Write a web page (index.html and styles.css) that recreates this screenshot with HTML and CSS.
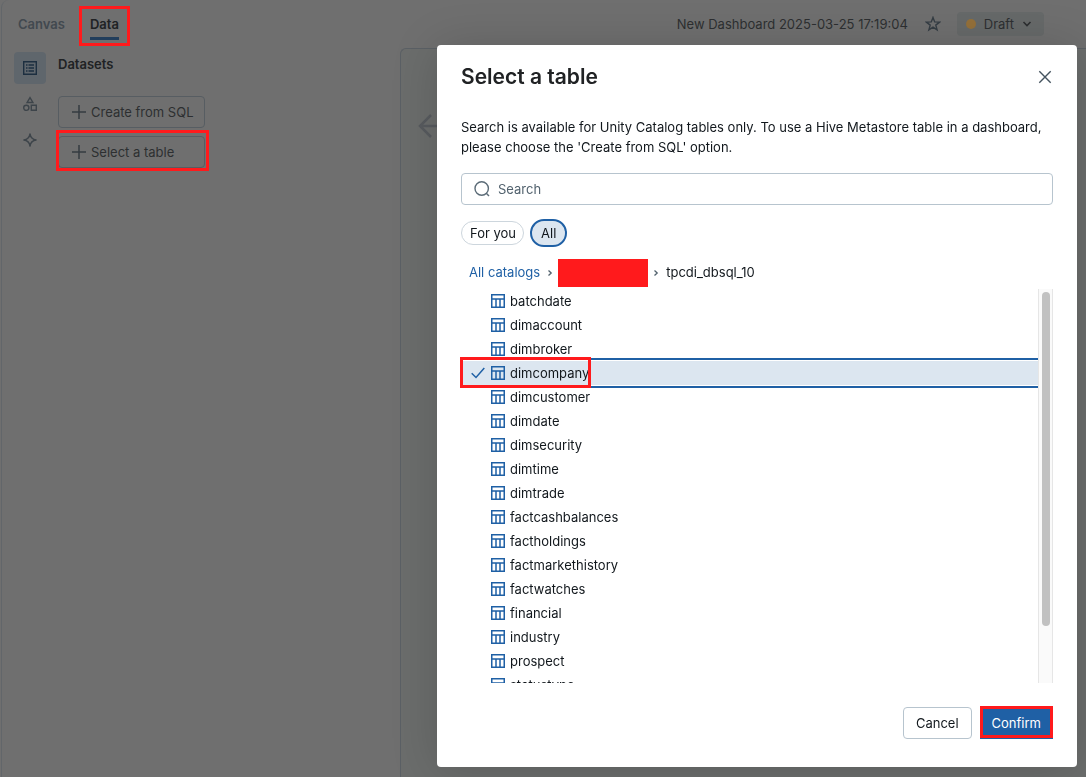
FILE: index.html
```html
<!DOCTYPE html>
<html lang="en">
<head>
<meta charset="utf-8">
<title>New Dashboard - Select a table</title>
<link rel="stylesheet" href="styles.css">
</head>
<body>
<svg class="defs" aria-hidden="true">
  <symbol id="table" viewBox="0 0 14 14"><path fill="none" stroke="currentColor" stroke-width="1.5" d="M.75.75h12.5v12.5H.75zM.75 5h12.5M5 5v8.5M9 5v8.5"/></symbol>
  <symbol id="plus" viewBox="0 0 14 14"><path fill="none" stroke="currentColor" stroke-width="1.5" d="M7 0v14M0 7h14"/></symbol>
  <symbol id="chevron" viewBox="0 0 6 8"><path fill="none" stroke="currentColor" stroke-width="1.3" d="M1.5 1.5 4.2 4 1.5 6.5"/></symbol>
</svg>

<div class="app">
  <header class="topbar">
    <nav class="tabs">
      <button class="tab" type="button">Canvas</button>
      <button class="tab tab-active marked" type="button"><span class="tab-label">Data</span></button>
    </nav>
    <div class="doc">
      <span class="doc-title">New Dashboard 2025-03-25 17:19:04</span>
      <button class="star" type="button" aria-label="Favorite">
        <svg width="16" height="16" viewBox="0 0 16 16"><path fill="none" stroke="currentColor" stroke-width="1.4" d="m8 1.4 1.7 4.5 4.9.2-3.8 3 1.3 4.8L8 11.2l-4.1 2.7 1.3-4.8-3.8-3 4.9-.2z"/></svg>
      </button>
      <button class="draft" type="button"><span class="dot"></span>Draft
        <svg width="10" height="8" viewBox="0 0 10 8"><path fill="none" stroke="currentColor" stroke-width="1.6" d="m1.5 2 3.5 3.5L8.5 2"/></svg>
      </button>
    </div>
  </header>
  <div class="workspace">
    <nav class="rail">
      <button class="rail-item rail-active" type="button" aria-label="Datasets">
        <svg width="14" height="14" viewBox="0 0 14 14"><path fill="none" stroke="currentColor" stroke-width="1.4" d="M.7.7h12.6v12.6H.7zM5.500 4H11M5.500 7H11M5.500 10H11M3 4h1.500M3 7h1.500M3 10h1.500"/></svg>
      </button>
      <button class="rail-item" type="button" aria-label="Widgets">
        <svg width="14" height="16" viewBox="0 0 14 16"><g fill="none" stroke="currentColor" stroke-width="1.4"><path d="M7 1.700 9.900 6.500H4.100zM8.300 9.300h5v5h-5z"/><circle cx="3.300" cy="11.800" r="2.600"/></g></svg>
      </button>
      <button class="rail-item" type="button" aria-label="Assistant">
        <svg width="14" height="14" viewBox="0 0 14 14"><path fill="none" stroke="currentColor" stroke-width="1.400" stroke-linejoin="round" d="M7 .9Q7.800 6.200 13.100 7 7.800 7.800 7 13.100 6.200 7.800.9 7 6.200 6.200 7 .9z"/></svg>
      </button>
    </nav>
    <aside class="datasets">
      <h2 class="datasets-title">Datasets</h2>
      <button class="action" type="button"><svg class="plus"><use href="#plus"/></svg>Create from SQL</button>
      <button class="action marked" type="button"><svg class="plus"><use href="#plus"/></svg>Select a table</button>
    </aside>
    <main class="canvas">
      <svg width="26" height="26" viewBox="0 0 26 26"><path fill="none" stroke="currentColor" stroke-width="2.500" d="M13 2 2 13l11 11M2 13h24"/></svg>
    </main>
  </div>
</div>

<div class="modal-layer">
  <section class="dialog" role="dialog" aria-labelledby="dialog-title">
    <header class="dialog-head">
      <h1 class="dialog-title" id="dialog-title">Select a table</h1>
      <button class="close" type="button" aria-label="Close">
        <svg width="14" height="14" viewBox="0 0 14 14"><path fill="none" stroke="currentColor" stroke-width="1.400" d="m1.300 1.300 11.400 11.400M12.700 1.300 1.300 12.700"/></svg>
      </button>
    </header>
    <p class="hint">Search is available for Unity Catalog tables only. To use a Hive Metastore table in a dashboard, please choose the 'Create from SQL' option.</p>
    <label class="search">
      <svg width="16" height="16" viewBox="0 0 16 16"><g fill="none" stroke="currentColor" stroke-width="1.400"><circle cx="7.700" cy="7.500" r="6.700"/><path d="m12.300 12.200 2.700 2.700"/></g></svg>
      <input class="search-input" type="text" placeholder="Search" aria-label="Search">
    </label>
    <div class="chips">
      <button class="chip" type="button">For you</button>
      <button class="chip chip-active" type="button">All</button>
    </div>
    <nav class="crumbs">
      <a class="crumb-link" href="#">All catalogs</a>
      <svg class="chevron"><use href="#chevron"/></svg>
      <span class="redacted"></span>
      <svg class="chevron"><use href="#chevron"/></svg>
      <span class="crumb-current">tpcdi_dbsql_10</span>
    </nav>
    <div class="list-frame">
      <ul class="list">
        <li class="row"><svg class="table-icon"><use href="#table"/></svg>batchdate</li>
        <li class="row"><svg class="table-icon"><use href="#table"/></svg>dimaccount</li>
        <li class="row"><svg class="table-icon"><use href="#table"/></svg>dimbroker</li>
        <li class="row row-selected">
          <span class="pick marked"><svg class="check" viewBox="0 0 14 12"><path fill="none" stroke="currentColor" stroke-width="1.500" d="m.7 6.300 4.300 4.200L13.300 1"/></svg><svg class="table-icon"><use href="#table"/></svg>dimcompany</span>
        </li>
        <li class="row"><svg class="table-icon"><use href="#table"/></svg>dimcustomer</li>
        <li class="row"><svg class="table-icon"><use href="#table"/></svg>dimdate</li>
        <li class="row"><svg class="table-icon"><use href="#table"/></svg>dimsecurity</li>
        <li class="row"><svg class="table-icon"><use href="#table"/></svg>dimtime</li>
        <li class="row"><svg class="table-icon"><use href="#table"/></svg>dimtrade</li>
        <li class="row"><svg class="table-icon"><use href="#table"/></svg>factcashbalances</li>
        <li class="row"><svg class="table-icon"><use href="#table"/></svg>factholdings</li>
        <li class="row"><svg class="table-icon"><use href="#table"/></svg>factmarkethistory</li>
        <li class="row"><svg class="table-icon"><use href="#table"/></svg>factwatches</li>
        <li class="row"><svg class="table-icon"><use href="#table"/></svg>financial</li>
        <li class="row"><svg class="table-icon"><use href="#table"/></svg>industry</li>
        <li class="row"><svg class="table-icon"><use href="#table"/></svg>prospect</li>
        <li class="row"><svg class="table-icon"><use href="#table"/></svg>statustype</li>
      </ul>
      <div class="scrollbar"><div class="thumb"></div></div>
    </div>
    <footer class="dialog-foot">
      <button class="btn" type="button">Cancel</button>
      <button class="btn btn-primary marked" type="button">Confirm</button>
    </footer>
  </section>
</div>
</body>
</html>
```
FILE: styles.css
```css
* { box-sizing: border-box; }

body {
  margin: 0;
  background: #6f6f6f;
  color: #11171c;
  font: 13px/20px Inter, "Liberation Sans", sans-serif;
  overflow: hidden;
}

button {
  margin: 0;
  padding: 0;
  border: 0;
  background: none;
  color: inherit;
  font: inherit;
  white-space: nowrap;
}

svg { display: block; flex: none; }
.defs { position: absolute; width: 0; height: 0; }

/* Red call-out frame around an element */
.marked { position: relative; }
.marked::after {
  content: "";
  position: absolute;
  inset: -3px;
  border: 3px solid #ff1a1c;
  pointer-events: none;
}

/* Dimmed page */
.app {
  display: flex;
  flex-direction: column;
  height: 100vh;
  margin-left: 1px;
  border-left: 1px solid #62666a;
  border-top-left-radius: 8px;
  color: #2d2f31;
}
.topbar {
  display: flex;
  justify-content: space-between;
  align-items: center;
  height: 48px;
  padding: 0 42px 0 16px;
}
.tabs { display: flex; gap: 25px; font-weight: 600; }
.tab { height: 32px; color: #42494f; }
.tab-active { color: #202224; }
.tab-label { display: block; padding: 6px 0 3px; border-bottom: 3px solid #223e5c; }
.tab-active.marked::after { inset: -2px -11px -6px; }
.doc { display: flex; align-items: center; }
.star { margin: 0 16px 0 17px; color: #353d44; }
.draft {
  display: flex;
  align-items: center;
  gap: 8px;
  height: 24px;
  padding: 0 12px 0 9px;
  border-radius: 4px;
  background: #666969;
}
.dot { width: 10px; height: 10px; border-radius: 50%; background: #94703a; }

.workspace { display: flex; flex: 1; }
.rail { display: flex; flex-direction: column; gap: 4px; padding: 4px 12px; }
.rail-item {
  display: grid;
  place-items: center;
  width: 32px;
  height: 32px;
  border-radius: 4px;
  color: #3d444a;
}
.rail-active { background: #5f666c; color: #1d2f40; }
.datasets {
  display: flex;
  flex-direction: column;
  align-items: flex-start;
  gap: 8px;
  width: 342px;
  padding-top: 6px;
}
.datasets-title { margin: 0 0 14px; font-size: 13px; line-height: 20px; font-weight: 600; color: #202224; }
.action {
  display: flex;
  align-items: center;
  gap: 5px;
  width: 147px;
  height: 32px;
  padding-left: 13px;
  border: 1px solid #575d62;
  border-radius: 4px;
}
.action.marked::after { inset: -7px -5px -4px -3px; }
.plus { width: 14px; height: 14px; color: #363c42; }
.canvas {
  flex: 1;
  padding: 64px 17px;
  border: solid #5b6065;
  border-width: 1px 0 0 1px;
  border-top-left-radius: 6px;
  background: #6b6d6c;
  color: #585b5f;
}

/* Dialog */
.modal-layer {
  position: fixed;
  inset: 0;
  display: flex;
  justify-content: flex-end;
  padding: 45px 9px 10px;
}
.dialog {
  display: flex;
  flex-direction: column;
  width: 640px;
  max-width: 100%;
  padding: 16px 24px 28px;
  border-radius: 4px;
  background: #fff;
  box-shadow: 0 3px 48px rgba(0, 0, 0, 0.16);
}
.dialog-head { display: flex; justify-content: space-between; align-items: center; }
.dialog-title { margin: 0; font-size: 21px; line-height: 32px; font-weight: 600; color: #202224; }
.close { padding: 1px; color: #44535f; }
.hint { margin: 24px 0 16px; }
.search {
  display: flex;
  align-items: center;
  gap: 8px;
  height: 32px;
  flex: none;
  padding: 0 12px;
  border: 1px solid #b7c4ce;
  border-radius: 4px;
  color: #5b6b77;
}
.search-input { flex: 1; padding: 0; border: 0; outline: 0; background: none; font: inherit; }
.search-input::placeholder { color: #52626e; opacity: 1; }
.chips { display: flex; gap: 8px; margin-top: 16px; }
.chip { height: 24px; padding: 0 7px 0 8px; border: 1px solid #cdd6dd; border-radius: 12px; }
.chip-active { padding: 0 9px; border: 0; background: #dce6f0; outline: 2px solid #1f60a5; }
.crumbs { display: flex; align-items: center; height: 28px; margin-top: 14px; padding-left: 8px; gap: 7px; }
.crumb-link, .crumb-current { padding-bottom: 2px; }
.crumb-link { color: #1f60a5; text-decoration: none; }
.chevron { width: 6px; height: 8px; color: #52626e; }
.redacted { width: 90px; height: 28px; margin: 0 -2px; background: #ff1a1c; }

.list-frame { display: flex; flex: 1; min-height: 0; margin-top: 2px; }
.list { flex: 1; margin: 0 0 0 -4px; padding: 0 0 0 4px; list-style: none; overflow: hidden; }
.row { display: flex; align-items: center; gap: 5px; height: 24px; padding-left: 30px; }
.row-selected {
  padding-left: 0;
  background: #dce6f0;
  box-shadow: 0 -1px #fff, 0 1px #fff, 0 -3px #1f60a5, 0 3px #1f60a5;
}
.pick { display: flex; align-items: center; gap: 5px; height: 24px; padding-left: 10px; }
.pick.marked::after { inset: -4px -2px -3px -1px; }
.table-icon { width: 14px; height: 14px; color: #1f60a5; }
.check { width: 14px; height: 12px; margin-right: 1px; color: #1f60a5; }
.scrollbar {
  width: 15px;
  padding: 3px;
  border: solid #e6e6e6;
  border-width: 0 1px;
  background: #fafafa;
}
.thumb { width: 8px; height: 86%; border-radius: 4px; background: #c1c1c1; }

.dialog-foot { display: flex; justify-content: flex-end; gap: 8px; margin-top: 24px; }
.btn { height: 32px; padding: 0 12px; border: 1px solid #b7c4ce; border-radius: 4px; }
.btn-primary { padding: 0 11px; border-color: #1f60a5; border-radius: 0; background: #1f60a5; color: #fff; }
.btn-primary.marked::after { inset: -2px -1px 0; }
```
